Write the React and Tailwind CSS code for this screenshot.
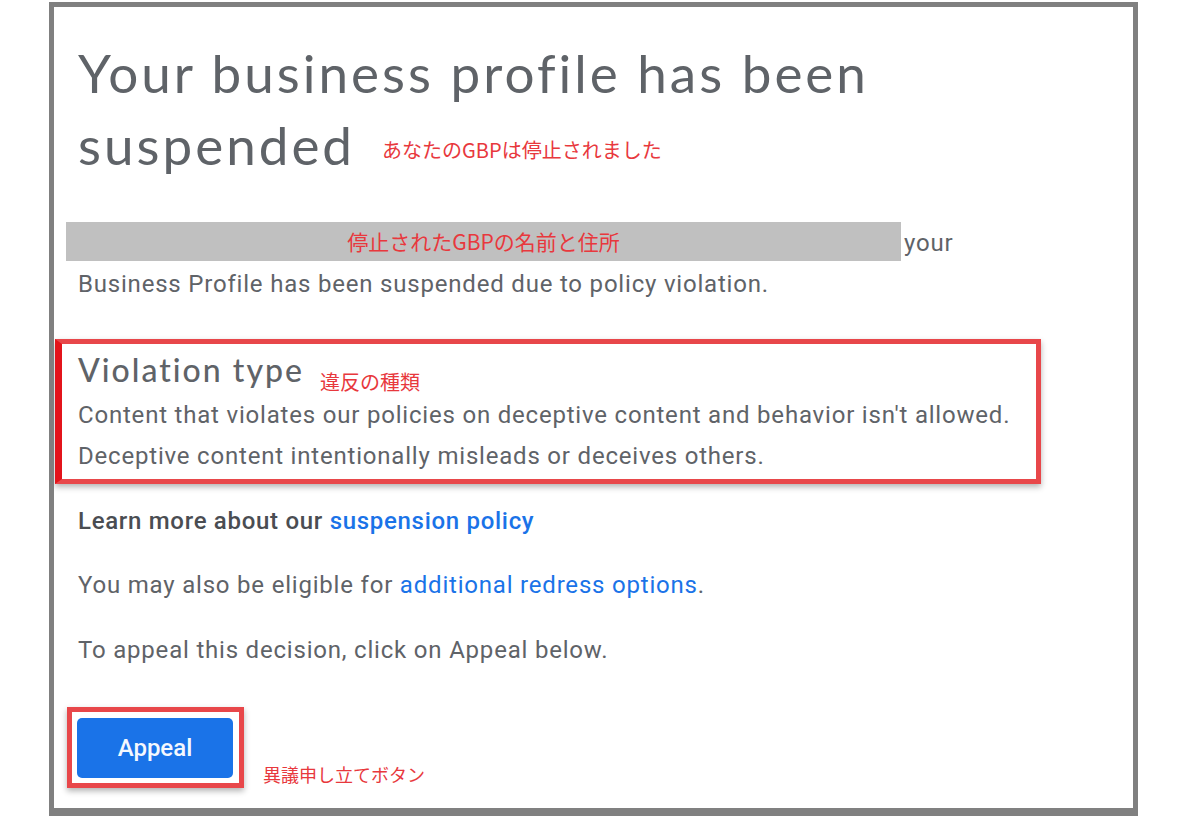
export default function App() {
  const jp = "font-['Noto_Sans_CJK_JP',sans-serif] text-[#e8383d] font-normal tracking-normal";
  return (
    <div className="min-h-screen bg-white">
      <div className="ml-[49px] mt-[2px] w-[1089px] h-[814px] overflow-hidden border-[5px] border-b-[8px] border-[#808080] bg-white pl-[24px] font-['Roboto',sans-serif]">
        <h1 className="mt-[30px] font-['Lato',sans-serif] text-[53px] leading-[72px] font-normal tracking-[3px] text-[#5f6368]">
          Your business profile has been
          <br />
          suspended
          <span className={`relative top-[-7px] ml-[27px] text-[20px] leading-[20px] ${jp}`}>
            あなたのGBPは停止されました
          </span>
        </h1>

        <p className="mt-[41px] text-[24px] leading-[41px] tracking-[0.8px] text-[#5f6368]">
          <span className="-ml-[12px] inline-block h-[39px] w-[835px] overflow-hidden bg-[#c0c0c0] text-center align-[-10px]">
            <span className={`text-[21px] leading-[39px] ${jp} tracking-[0.6px]`}>停止されたGBPの名前と住所</span>
          </span>
          <span className="ml-[3px]">your</span>
          <br />
          Business Profile has been suspended due to policy violation.
        </p>

        <div className="-ml-[23px] mt-[34px] w-[986px] border-[5px] border-l-[7px] border-[#e8474a] border-l-[#e3141b] bg-white pb-[2px] pl-[16px] pt-[6px] shadow-[0_3px_6px_rgba(0,0,0,0.3)]">
          <h2 className="font-['Lato',sans-serif] text-[32px] leading-[40px] font-medium tracking-[2px] text-[#5f6368]">
            Violation type
            <span className={`relative top-[8px] ml-[16px] text-[20px] leading-[20px] ${jp}`}>違反の種類</span>
          </h2>
          <p className="mt-[5px] text-[24px] leading-[41px] tracking-[0.8px] text-[#5f6368]">
            Content that violates our policies on deceptive content and behavior isn't allowed.
            <br />
            Deceptive content intentionally misleads or deceives others.
          </p>
        </div>

        <p className="mt-[21px] text-[24px] leading-[32px] font-medium tracking-[0.7px] text-[#4a4d52]">
          Learn more about our <span className="text-[#1a73e8]">suspension policy</span>
        </p>

        <p className="mt-[32px] text-[24px] leading-[32px] tracking-[0.8px] text-[#5f6368]">
          You may also be eligible for <span className="text-[#1a73e8]">additional redress options</span>.
        </p>

        <p className="mt-[33px] text-[24px] leading-[32px] tracking-[0.8px] text-[#5f6368]">
          To appeal this decision, click on Appeal below.
        </p>

        <div className="mt-[41px] flex items-end">
          <div className="-ml-[11px] flex h-[81px] w-[177px] items-start border-[5px] border-[#e8474a] bg-white pl-[5px] pt-[6px] shadow-[0_3px_6px_rgba(0,0,0,0.3)]">
            <button className="flex h-[60px] w-[156px] items-center justify-center rounded-[5px] bg-[#1a73e8] text-[24px] font-medium text-[#f4f8fe]">
              Appeal
            </button>
          </div>
          <span className={`mb-[4px] ml-[19px] text-[18px] leading-[20px] ${jp}`}>異議申し立てボタン</span>
        </div>
      </div>
    </div>
  );
}
